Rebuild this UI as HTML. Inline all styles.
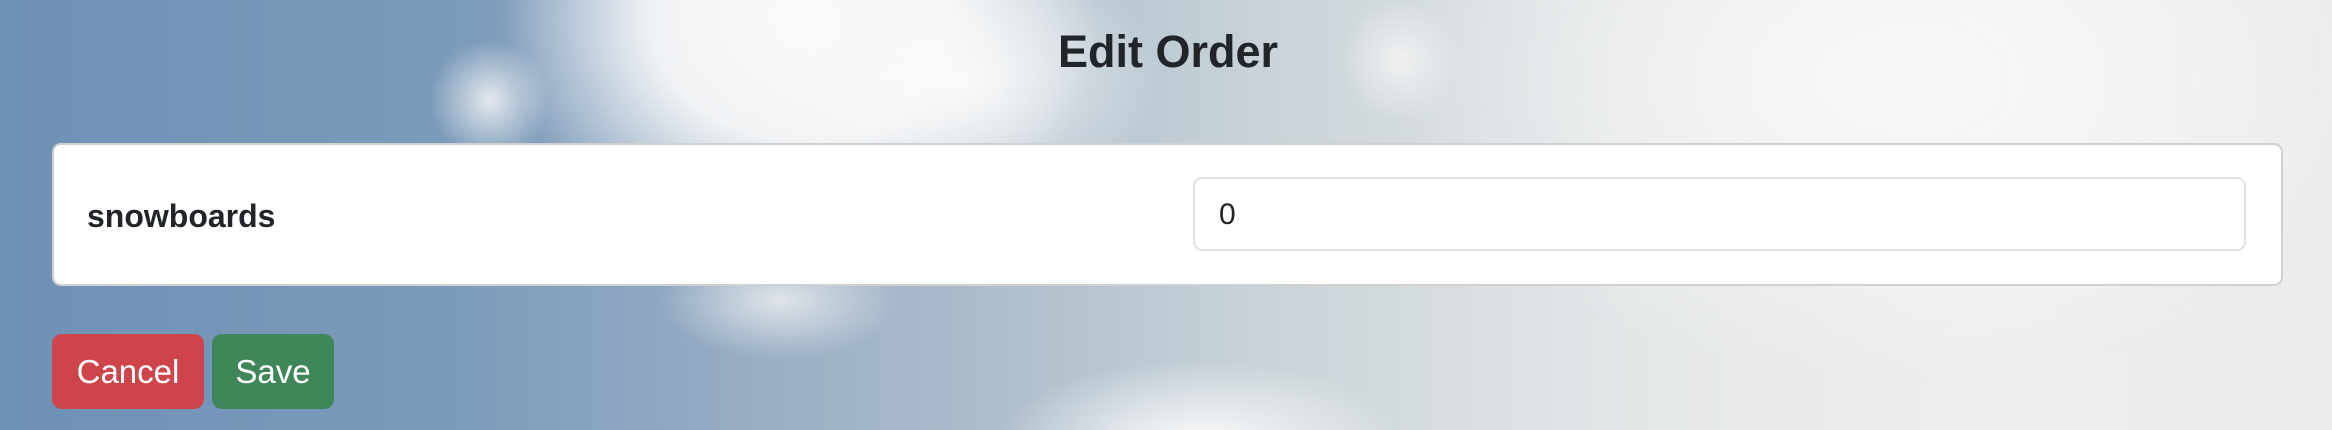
<!DOCTYPE html>
<html><head><style>
html,body{margin:0;padding:0;width:2332px;height:430px;overflow:hidden}
body{font-family:"Liberation Sans",sans-serif;position:relative;
background:
radial-gradient(ellipse 300px 240px at 800px 20px,rgba(250,250,250,1),rgba(250,250,250,.9) 50%,rgba(250,250,250,0) 100%),
radial-gradient(ellipse 200px 140px at 960px 80px,rgba(250,250,250,.95),rgba(250,250,250,0) 100%),
radial-gradient(ellipse 60px 60px at 490px 100px,rgba(245,245,245,.85),rgba(245,245,245,0) 100%),
radial-gradient(ellipse 60px 60px at 1400px 60px,rgba(245,245,245,.85),rgba(245,245,245,0) 100%),
radial-gradient(ellipse 200px 80px at 1200px 440px,rgba(250,250,250,1),rgba(250,250,250,0) 100%),
radial-gradient(ellipse 120px 60px at 780px 300px,rgba(240,240,240,.8),rgba(240,240,240,0) 100%),
radial-gradient(ellipse 500px 300px at 1900px 80px,rgba(248,248,248,1),rgba(248,248,248,0) 100%),
linear-gradient(90deg,#6e91b6 0%,#7d9bbb 20%,#a8b9c9 40%,#cbd4d9 55%,#e4e7e8 70%,#eeeeee 85%,#ebebeb 100%);}
h1{position:absolute;left:0;width:2332px;top:24px;margin:0;text-align:center;font-size:45px;font-weight:bold;color:#212529;line-height:56px;padding-left:2px}
.card{position:absolute;left:52px;top:143px;width:2227px;height:139px;background:#fff;border:2px solid #d0d0d0;border-radius:9px}
.lbl{position:absolute;left:33px;top:52px;font-size:32px;font-weight:bold;color:#212529;line-height:38px}
.inp{position:absolute;left:1139px;top:32px;width:1053px;height:74px;border:2px solid #dee2e6;border-radius:9px;box-sizing:border-box;font-size:30px;color:#212529;padding:18px 0 0 24px;line-height:36px}
.btn{position:absolute;top:334px;height:75px;border-radius:10px;color:#fff;font-size:33px;text-align:center;line-height:75px}
</style></head><body>
<h1>Edit Order</h1>
<div class="card"><div class="lbl">snowboards</div><div class="inp">0</div></div>
<div class="btn" style="left:52px;width:152px;background:#cd444b">Cancel</div>
<div class="btn" style="left:212px;width:122px;background:#3f8759">Save</div>
</body></html>
